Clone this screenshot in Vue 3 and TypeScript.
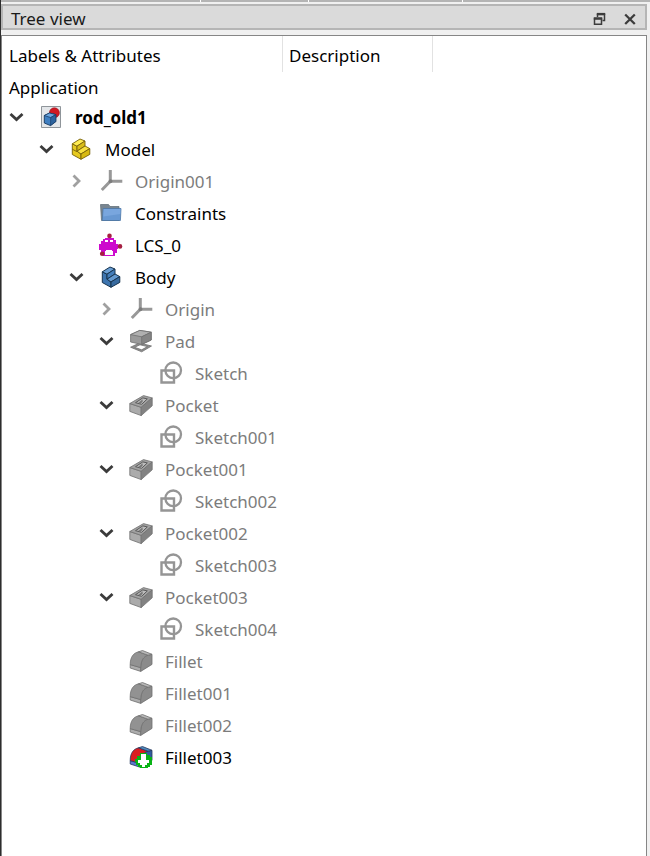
<script setup lang="ts">
import { computed, ref } from 'vue'

type IconName = 'document' | 'model' | 'origin' | 'folder' | 'lcs' | 'body' | 'pad' | 'sketch' | 'pocket' | 'fillet' | 'filletTip'

interface TreeItem {
  label: string
  level: number
  icon: IconName
  muted?: boolean
  expandable?: boolean
}

const items: TreeItem[] = [
  { label: 'rod_old1', level: 0, icon: 'document', expandable: true },
  { label: 'Model', level: 1, icon: 'model', expandable: true },
  { label: 'Origin001', level: 2, icon: 'origin', muted: true, expandable: true },
  { label: 'Constraints', level: 2, icon: 'folder' },
  { label: 'LCS_0', level: 2, icon: 'lcs' },
  { label: 'Body', level: 2, icon: 'body', expandable: true },
  { label: 'Origin', level: 3, icon: 'origin', muted: true, expandable: true },
  { label: 'Pad', level: 3, icon: 'pad', muted: true, expandable: true },
  { label: 'Sketch', level: 4, icon: 'sketch', muted: true },
  { label: 'Pocket', level: 3, icon: 'pocket', muted: true, expandable: true },
  { label: 'Sketch001', level: 4, icon: 'sketch', muted: true },
  { label: 'Pocket001', level: 3, icon: 'pocket', muted: true, expandable: true },
  { label: 'Sketch002', level: 4, icon: 'sketch', muted: true },
  { label: 'Pocket002', level: 3, icon: 'pocket', muted: true, expandable: true },
  { label: 'Sketch003', level: 4, icon: 'sketch', muted: true },
  { label: 'Pocket003', level: 3, icon: 'pocket', muted: true, expandable: true },
  { label: 'Sketch004', level: 4, icon: 'sketch', muted: true },
  { label: 'Fillet', level: 3, icon: 'fillet', muted: true },
  { label: 'Fillet001', level: 3, icon: 'fillet', muted: true },
  { label: 'Fillet002', level: 3, icon: 'fillet', muted: true },
  { label: 'Fillet003', level: 3, icon: 'filletTip' },
]

const collapsed = ref<Set<string>>(new Set(['Origin001', 'Origin']))

const visibleItems = computed(() => {
  const shown: TreeItem[] = []
  let hiddenBelow = Infinity
  for (const item of items) {
    if (item.level > hiddenBelow) continue
    hiddenBelow = collapsed.value.has(item.label) ? item.level : Infinity
    shown.push(item)
  }
  return shown
})

function toggle(label: string) {
  const next = new Set(collapsed.value)
  if (!next.delete(label)) next.add(label)
  collapsed.value = next
}
</script>

<template>
  <main class="dock">
    <div class="toolbar-edge"><span></span><span></span><span></span><span></span></div>
    <header class="titlebar">
      <h1>Tree view</h1>
      <button type="button" class="window-button" aria-label="Float">
        <svg width="14" height="14" viewBox="0 0 14 14" fill="none" stroke="#3c3c3c">
          <path d="M4.5 5V2.5H11.5V8.5H9.5" stroke-width="1.5" />
          <path d="M3.8 2H12.2" stroke-width="2.2" />
          <path d="M1.5 6.5H8.5V12.2H1.5Z" stroke-width="1.5" />
          <path d="M.8 6.5H9.2" stroke-width="2.4" />
        </svg>
      </button>
      <button type="button" class="window-button" aria-label="Close">
        <svg width="14" height="14" viewBox="0 0 14 14" fill="none" stroke="#3c3c3c" stroke-width="2.3">
          <path d="M2.2 2.5L11.8 12M11.8 2.5L2.2 12" />
        </svg>
      </button>
    </header>

    <section class="panel">
      <div class="columns">
        <span class="column labels">Labels &amp; Attributes</span>
        <span class="column description">Description</span>
      </div>
      <p class="application">Application</p>
      <ul class="tree" role="tree">
        <li
          v-for="item in visibleItems"
          :key="item.label"
          class="row"
          :class="{ muted: item.muted, root: item.level === 0 }"
          :style="{ '--level': item.level }"
          role="treeitem"
          :aria-level="item.level + 1"
          :aria-expanded="item.expandable ? !collapsed.has(item.label) : undefined"
        >
          <button v-if="item.expandable" type="button" class="toggle" :aria-label="'Toggle ' + item.label" @click="toggle(item.label)">
            <svg width="16" height="16" viewBox="0 0 16 16" fill="none" stroke-width="2.8">
              <path v-if="collapsed.has(item.label)" d="M4.5 2.5L10 8L4.5 13.5" stroke="#a0a0a0" />
              <path v-else d="M1.5 5L7.5 10.6L13.5 5" stroke="#3b3b3b" />
            </svg>
          </button>
          <span v-else class="toggle"></span>

          <svg class="icon" width="24" height="24" viewBox="0 0 24 24" aria-hidden="true">
            <g v-if="item.icon === 'document'">
              <path d="M2.5 1.5H21.5V22.5H2.5Z" fill="#e3e6e9" stroke="#8f959a" />
              <circle cx="15.4" cy="7.8" r="5" fill="#d01822" stroke="#9a1420" stroke-width=".6" />
              <path d="M5.3 10.5L10.5 8L16.8 9.6V16.6L11.5 20.6L5.3 18Z" fill="#3f7fc1" stroke="#14375f" stroke-width=".9" />
              <path d="M5.3 10.5L10.5 8L16.8 9.6L11.7 12.6Z" fill="#6ba4dd" stroke="#14375f" stroke-width=".7" />
              <path d="M11.7 12.6L16.8 9.6V16.6L11.5 20.6Z" fill="#2c639e" stroke="#14375f" stroke-width=".6" />
            </g>
            <g v-else-if="item.icon === 'model'" stroke="#766008" stroke-width=".9" stroke-linejoin="round">
              <path d="M3.3 6.8L8 9.2V14.2L12 17V22.3L3.3 17.5Z" fill="#e6c91e" />
              <path d="M3.3 6.8L11 2L16 4L8 9.2Z" fill="#ffec50" />
              <path d="M8 9.2L16 4V9L8 14.2Z" fill="#d9bd18" />
              <path d="M8 14.2L16 9L20.8 11.6L12 17Z" fill="#f8e240" />
              <path d="M12 17L20.8 11.6V17.4L12 22.3Z" fill="#d8ba12" />
              <path d="M3.3 12.2L8 14.7" fill="none" />
            </g>
            <g v-else-if="item.icon === 'body'" stroke="#17344f" stroke-width="1" stroke-linejoin="round">
              <path d="M3.3 6.8L8 9.2V14.2L12 17V22.3L3.3 17.5Z" fill="#3d75b0" />
              <path d="M3.3 6.8L11 2L16 4L8 9.2Z" fill="#689dd3" />
              <path d="M8 9.2L16 4V9L8 14.2Z" fill="#447db9" />
              <path d="M8 14.2L16 9L20.8 11.6L12 17Z" fill="#6499cf" />
              <path d="M12 17L20.8 11.6V17.4L12 22.3Z" fill="#376a9f" />
            </g>
            <g v-else-if="item.icon === 'origin'" fill="none" stroke="#989898" stroke-width="3">
              <path d="M11.3 1V12.3H23.3M11.3 12.3L2.8 21" />
              <circle cx="11.5" cy="12.2" r="1.5" fill="#7c7c7c" stroke="#7c7c7c" stroke-width="1" />
            </g>
            <g v-else-if="item.icon === 'folder'">
              <path d="M1.5 3.5H9.5L11 5.5H20V19.5H2.5Z" fill="#788590" stroke="#66727c" stroke-width=".8" />
              <path d="M4.2 7.5H22L21.4 19.5H3.2Z" fill="#6898d2" stroke="#4c76a5" stroke-width=".8" />
              <path d="M4.6 8H21.5L21.2 13L4.3 15.5Z" fill="#79a6de" />
            </g>
            <g v-else-if="item.icon === 'lcs'">
              <path d="M6 5H15V7H17V11H19V16H18V20H16V23H4V20H2V17H0V11H2V8H4V6H6Z" fill="#cd0bcd" />
              <path d="M6 7H9V9H6ZM11 7H14V9H11ZM7 17H13V18H14V22H6V18H7Z" fill="#fff" />
              <circle cx="10.5" cy="2.9" r="2.3" fill="#a51f42" />
              <circle cx="21" cy="13.4" r="2.3" fill="#a51f42" />
              <circle cx="3.2" cy="20.8" r="2.3" fill="#a51f42" />
            </g>
            <g v-else-if="item.icon === 'pad'" stroke="#707070" stroke-width=".8" stroke-linejoin="round">
              <path d="M1.6 18.2L10.5 14L22.5 17L12.7 22.8Z" fill="#8d8d8d" />
              <path d="M5.5 18.3L11 15.8L18.5 17.6L12.7 20.8Z" fill="#fff" />
              <path d="M1.6 5.6L10.8 1.4L22.2 3.2V11L12.7 15.4L1.6 13Z" fill="#9a9a9a" />
              <path d="M1.6 5.6L10.8 1.4L22.2 3.2L12.7 7.8Z" fill="#b0b0b0" />
              <path d="M12.7 7.8L22.2 3.2V11L12.7 15.4Z" fill="#858585" />
            </g>
            <g v-else-if="item.icon === 'sketch'" fill="none" stroke="#959595">
              <path d="M2.5 9.5H15V21.5H2.5Z" stroke-width="2.4" />
              <circle cx="14.2" cy="9.3" r="7.8" stroke-width="2.3" />
            </g>
            <g v-else-if="item.icon === 'pocket'" stroke="#707070" stroke-width=".8" stroke-linejoin="round">
              <path d="M.8 10.5L12.2 14.3V22.6L.8 18.4Z" fill="#ababab" />
              <path d="M.8 10.5L14.5 2.6L23.2 4.9L12.2 14.3Z" fill="#a2a2a2" />
              <path d="M12.2 14.3L23.2 4.9V12.8L12.2 22.6Z" fill="#828282" />
              <path d="M6.5 9.7L13.8 4.9L18.3 5.9L12.6 11.3Z" fill="#bcbcbc" stroke="#5a5a5a" stroke-width="1" />
              <path d="M9.2 9.9L13.6 6.2V8.8L11.8 10.7Z" fill="#777" stroke="none" />
            </g>
            <g v-else stroke-width=".8" stroke-linejoin="round" :stroke="item.icon === 'fillet' ? '#707070' : '#26385e'">
              <path d="M1.2 15.6L11.7 18.6V22.4L1.2 19Z" :fill="item.icon === 'fillet' ? '#adadad' : '#5c78cc'" />
              <path d="M11.7 22.4V18.6C11.7 11.8 14.8 7 19 6.2L23 5.3V15.4Z" :fill="item.icon === 'fillet' ? '#8b8b8b' : '#315d9e'" />
              <path d="M1.2 15.6C1.2 8 4.5 4 9.5 2.8L19 6.2C14.8 7 11.7 11.8 11.7 18.6Z" :fill="item.icon === 'fillet' ? '#929292' : '#db1c20'" />
              <path d="M9.5 2.8L13.5 1.5L23 5.3L19 6.2Z" :fill="item.icon === 'fillet' ? '#b8b8b8' : '#5089bd'" />
              <g v-if="item.icon === 'filletTip'" stroke="none">
                <path d="M11 8H18V10H21V12H23V20H21V22H19V23H11V22H9V20H7V17H6V14H8V11H11Z" fill="#08b315" />
                <path d="M12 9H17V15H20V18H18V20H16V22H13V20H11V18H9V15H12Z" fill="#fff" />
              </g>
            </g>
          </svg>
          <span class="name">{{ item.label }}</span>
        </li>
      </ul>
    </section>
  </main>
</template>

<style>
body {
  margin: 0;
  background: #f0f0f0;
}
</style>

<style scoped>
.dock {
  box-sizing: border-box;
  display: flex;
  flex-direction: column;
  min-height: 100vh;
  padding-right: 3px;
  border-left: 1px solid #2d2d2d;
  background: #f0f0f0;
  color: #000;
  font-family: 'Segoe UI', 'Noto Sans', sans-serif;
  font-size: 17px;
  line-height: 24px;
}

.toolbar-edge {
  display: grid;
  grid-template-columns: 199px 107px 153px 1fr;
  gap: 1px;
  height: 2px;
  margin-right: -3px;
  margin-bottom: 2px;
  background: #fff;
}

.toolbar-edge span {
  background: #b4b4b4;
}

.titlebar {
  box-sizing: border-box;
  display: flex;
  align-items: center;
  gap: 16px;
  height: 26px;
  padding: 4px 8px 0;
  border: 2px solid #b5b5b5;
  background: #dadada;
}

h1 {
  flex: 1;
  margin: 0;
  font-size: 17px;
  font-weight: 400;
  color: #1a1a1a;
}

button {
  padding: 0;
  border: 0;
  background: transparent;
}

.window-button {
  display: flex;
}

.panel {
  flex: 1;
  margin-top: 5px;
  border: 1px solid #868686;
  border-bottom: 0;
  background: #fff;
}

.columns {
  display: flex;
  height: 36px;
}

.column {
  box-sizing: border-box;
  padding: 8px 6px 4px;
  border-right: 1px solid #e2e2e2;
}

.labels {
  width: 281px;
  padding-left: 7px;
}

.description {
  width: 150px;
}

.application {
  margin: 0;
  padding: 4px 7px 1px;
}

.tree {
  margin: 0;
  padding: 0;
  list-style: none;
}

.row {
  display: flex;
  align-items: center;
  height: 32px;
  padding-left: calc(7px + var(--level) * 30px);
}

.toggle {
  display: flex;
  width: 16px;
  height: 16px;
}

.icon {
  flex: none;
  margin-left: 14px;
}

.name {
  margin-left: 12px;
  padding-top: 2px;
  white-space: nowrap;
}

.muted {
  color: #7c7c7c;
}

.root {
  font-weight: 700;
}
</style>
